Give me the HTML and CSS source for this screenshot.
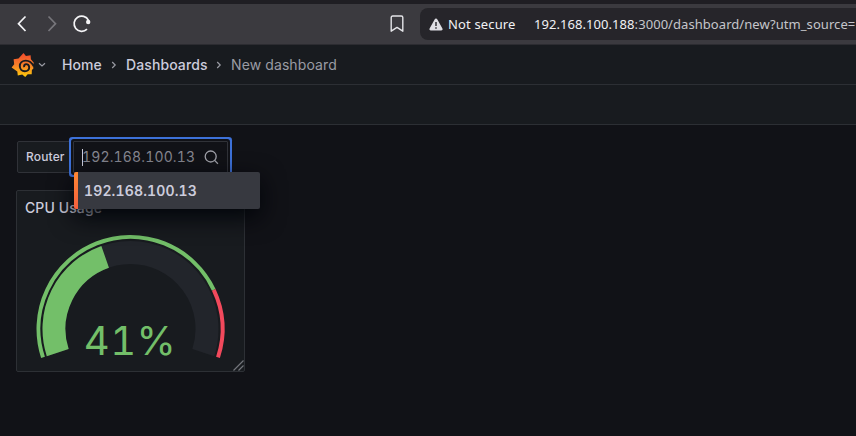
FILE: index.html
```html
<!DOCTYPE html>
<html lang="en">
<head>
<meta charset="utf-8">
<title>New dashboard</title>
<link rel="stylesheet" href="styles.css">
</head>
<body>
<header class="browser">
  <svg class="nav-icons" width="100" height="32" viewBox="0 0 100 32" fill="none" stroke-width="1.7">
    <path d="M25.5 8.500 18.500 15.700l7 7.300" stroke="#f4f4f6"/>
    <path d="M48.5 8.500l7 7.200-7 7.300" stroke="#77767b"/>
    <path d="M88.500 12.300A7.600 7.600 0 1 0 87 21.200" stroke="#f4f4f6"/>
    <circle cx="88.200" cy="14" r="2.200" fill="#f4f4f6"/>
  </svg>
  <svg class="bookmark" width="14" height="18" viewBox="0 0 14 18" fill="none" stroke="#e4e4e8" stroke-width="1.4"><path d="M1.2 2.5Q1.2 1 2.7 1h8.6q1.5 0 1.5 1.5V16.2L7 12.4l-5.8 3.8z" stroke-linejoin="round"/></svg>
  <div class="address">
    <svg width="14" height="13" viewBox="0 0 14 13"><path d="M7 .5q.9 0 1.4.9l5 9q.8 1.9-1.1 2H1.7q-1.9-.1-1.1-2l5-9Q6.100.5 7 .5z" fill="#dedee3"/><path d="M7 4v4M7 9.300v1.500" stroke="#26252a" stroke-width="1.4"/></svg>
    <span class="security">Not secure</span>
    <span class="url"><b>192.168.100.188</b>:3000/dashboard/new?utm_source=</span>
  </div>
</header>
<nav class="crumbs">
  <svg class="logo" width="24" height="26" viewBox="0 0 24 26">
    <defs><linearGradient id="flame" x1="0" y1="0" x2="0" y2="1"><stop offset="0" stop-color="#f0482c"/><stop offset=".5" stop-color="#f7802a"/><stop offset="1" stop-color="#fccb0a"/></linearGradient></defs>
    <path fill="url(#flame)" d="M12.500 1l2.400 3 4.700-.7.300 3.900 2.900 3.500-.8 2.300.4 3.500-1.500 1.500-.2 4.200-4 .1-2.500 2.600-3-2.300-4.400.9-.5-4L.600 15.500l2.600-3.300-.6-5 4.900-.7z"/>
    <path d="M22.800 14.300C21 10.800 18.500 8.600 14.800 8.600C11.200 8.600 8.800 11 8.800 14.100C8.800 17.200 11 19.300 13.800 19.300C16.700 19.300 18.300 17.500 18.200 15.300C18 13 16.500 12 14.900 12.200C13.300 12.400 12.700 13.800 13.300 15.200" fill="none" stroke="#181b1f" stroke-width="1.900"/>
  </svg>
  <svg class="caret" width="8" height="6" viewBox="0 0 8 6"><path d="M1 1.300l3 2.700 3-2.700" fill="none" stroke="#9a9ba3" stroke-width="1.200"/></svg>
  <a class="home">Home</a>
  <svg class="sep" width="6" height="8" viewBox="0 0 6 8"><path d="M1.200 1l3 3-3 3" fill="none" stroke="#9a9ba3" stroke-width="1.200"/></svg>
  <a class="boards">Dashboards</a>
  <svg class="sep" width="6" height="8" viewBox="0 0 6 8"><path d="M1.200 1l3 3-3 3" fill="none" stroke="#9a9ba3" stroke-width="1.200"/></svg>
  <span class="current">New dashboard</span>
</nav>
<div class="toolbar"></div>
<main>
  <div class="variables">
    <label>Router</label>
    <div class="field">
      <i class="cursor"></i><span>192.168.100.13</span>
      <svg width="15" height="15" viewBox="0 0 15 15" fill="none" stroke="#a0a1a9" stroke-width="1.300"><circle cx="6.700" cy="6.500" r="5.500"/><path d="M10.600 10.400l3.300 3.300"/></svg>
      <div class="menu">192.168.100.13</div>
    </div>
  </div>
  <section class="panel">
    <h2>CPU Usage</h2>
    <div class="gauge">
      <svg width="228" height="180" viewBox="17 191 228 180" fill="none">
        <g transform="translate(130.500 329)">
          <path d="M-72.760 23.640A76.500 76.500 0 1 1 72.760 23.640" stroke="#22252b" stroke-width="23"/>
          <path d="M-72.760 23.640A76.500 76.500 0 0 1 -25.350 -72.180" stroke="#73bf69" stroke-width="23"/>
          <path d="M-87.500 28.430A92 92 0 0 1 83.240 -39.170" stroke="#73bf69" stroke-width="4"/>
          <path d="M83.240 -39.170A92 92 0 0 1 87.500 28.430" stroke="#f2495c" stroke-width="4"/>
        </g>
        <path d="M233.500 370.500l10-10M238.500 370.500l5-5" stroke="#73757b" stroke-width="1.200"/>
      </svg>
      <span class="value">41%</span>
    </div>
  </section>
</main>
</body>
</html>
```
FILE: styles.css
```css
* { box-sizing: border-box; }
body { margin: 0; width: 856px; height: 436px; overflow: hidden; background: #111217; color: #ccccdc; font: 14px Inter, sans-serif; }
.browser { display: flex; align-items: center; height: 45px; border-top: 4px solid #1f1e23; border-bottom: 1px solid #2c2c31; background: #3b3a3f; }
.nav-icons { flex: none; }
.bookmark { margin-left: 290px; flex: none; }
.address { display: flex; align-items: center; height: 32px; flex: 1; margin-left: 16px; padding-left: 9px; border-radius: 8px 0 0 8px; background: #26252a; color: #c5c5cb; white-space: nowrap; font: 13px "Noto Sans", sans-serif; }
.address svg { flex: none; }
.security { flex: none; width: 86px; margin-left: 5px; color: #f1f1f4; letter-spacing: .15px; }
.url { letter-spacing: .06px; }
.url b { font-weight: 400; color: #f1f1f4; }
.crumbs { display: flex; align-items: center; height: 40px; padding-left: 11px; background: #181b1f; border-bottom: 1px solid #2c2f34; letter-spacing: .1px; }
.crumbs a { font-weight: 500; }
.caret { margin-left: 3px; }
.home { width: 40px; margin-left: 16px; }
.sep { margin: 0 9px; }
.boards { width: 81px; }
.current { color: #9a9ba4; }
.toolbar { height: 40px; background: #181b1f; border-bottom: 1px solid #2c2f34; }
main { padding: 16px; }
.variables { display: flex; height: 33px; }
label { width: 56px; height: 32px; padding: 0 0 0 8px; border: 1px solid #303238; border-radius: 2px; background: #181b1f; font-size: 12px; font-weight: 500; line-height: 30px; letter-spacing: .15px; margin-left: 1px; }
.field { position: relative; display: flex; align-items: center; width: 155px; height: 32px; padding-left: 8px; border: 1px solid #303238; background: #111217; color: #858690; box-shadow: 0 0 0 2px #111217, 0 0 0 4px #3d71d9; border-radius: 1px; font-feature-settings: "tnum"; letter-spacing: .15px; }
.cursor { width: 1px; height: 17px; background: #ccccdc; }
.field span { width: 113px; margin: 0 9px 1px -1px; }
.menu { position: absolute; left: 0; top: 30px; width: 186px; height: 37px; padding-left: 10px; border-radius: 2px; background: linear-gradient(#ff8833, #f55f3e) 0 0 / 4px 100% no-repeat #373940; box-shadow: 0 8px 24px #010409; color: #ccccdc; font-weight: 600; line-height: 38px; z-index: 2; }
.panel { width: 229px; height: 182px; margin-top: 16px; border: 1px solid #2d3035; border-radius: 2px; background: #181b1f; }
h2 { margin: 0; padding-left: 8px; height: 32px; line-height: 33px; font-size: 14px; font-weight: 500; letter-spacing: .1px; }
.gauge { display: grid; margin-top: -32px; }
.gauge svg, .value { grid-area: 1 / 1; }
.value { align-self: end; justify-self: center; margin: 0 2px 6px 0; font: 40px/48px Inter, sans-serif; font-feature-settings: "tnum"; letter-spacing: .4px; color: #73bf69; }
```
